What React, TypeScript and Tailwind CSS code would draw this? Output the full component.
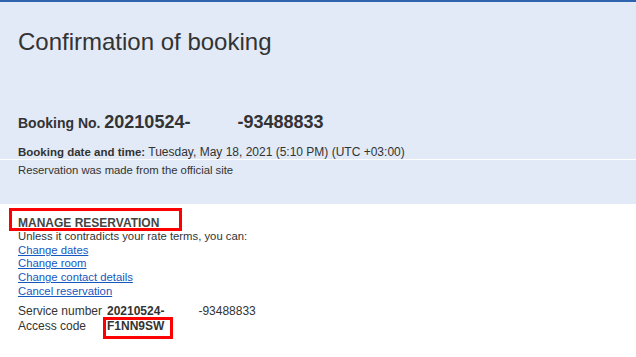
import React from "react";

export default function App() {
  const font = { fontFamily: '"Liberation Sans", Arial, sans-serif' };
  return (
    <div className="w-[636px] h-[357px] bg-white overflow-hidden text-[#333]" style={font}>
      <div className="border-t-2 border-[#2e63ae] bg-[#e1eaf6] pb-[27px]">
        <div className="px-[18px] pt-[28px]">
          <h1 className="text-[24px] leading-[24px] font-normal text-[#333]">Confirmation of booking</h1>
          <div className="mt-[59px] flex items-baseline leading-[18px] font-bold text-[#333]">
            <span className="text-[14px]">Booking No.&nbsp;</span>
            <span className="text-[18px]">20210524-</span>
            <span className="text-[18px] ml-[47px]">-93488833</span>
          </div>
          <div className="mt-[14px] text-[12px] leading-[13px]">
            <span className="font-bold text-[11.5px]">Booking date and time:</span> Tuesday, May 18, 2021 (5:10 PM) (UTC +03:00)
          </div>
        </div>
        <div className="border-t border-white px-[18px] pt-[4px]">
          <div className="text-[11.3px] leading-[13px]">Reservation was made from the official site</div>
        </div>
      </div>

      <div className="px-[18px] pt-[12px]">
        <div className="relative">
          <div className="text-[12px] leading-[14px] font-bold text-[#444]">MANAGE RESERVATION</div>
          <div className="absolute left-[-9px] top-[-8px] w-[173px] h-[23px] border-[3px] border-[#f00]" />
        </div>
        <div className="text-[11.3px] leading-[13.7px] text-[#333]">
          <div>Unless it contradicts your rate terms, you can:</div>
          <div><a className="text-[#1558c0] underline" href="#">Change dates</a></div>
          <div><a className="text-[#1558c0] underline" href="#">Change room</a></div>
          <div><a className="text-[#1558c0] underline" href="#">Change contact details</a></div>
          <div><a className="text-[#1558c0] underline" href="#">Cancel reservation</a></div>
        </div>
        <div className="mt-[5.5px] grid grid-cols-[89px_1fr] text-[12px] leading-[15px] text-[#333]">
          <div>Service number</div>
          <div>
            <span className="font-bold">20210524-</span>
            <span className="ml-[34px]">-93488833</span>
          </div>
          <div>Access code</div>
          <div className="relative">
            <span className="font-bold">F1NN9SW</span>
            <div className="absolute left-[-4px] top-[-2px] w-[70px] h-[22px] border-[3px] border-[#f00]" />
          </div>
        </div>
      </div>
    </div>
  );
}
